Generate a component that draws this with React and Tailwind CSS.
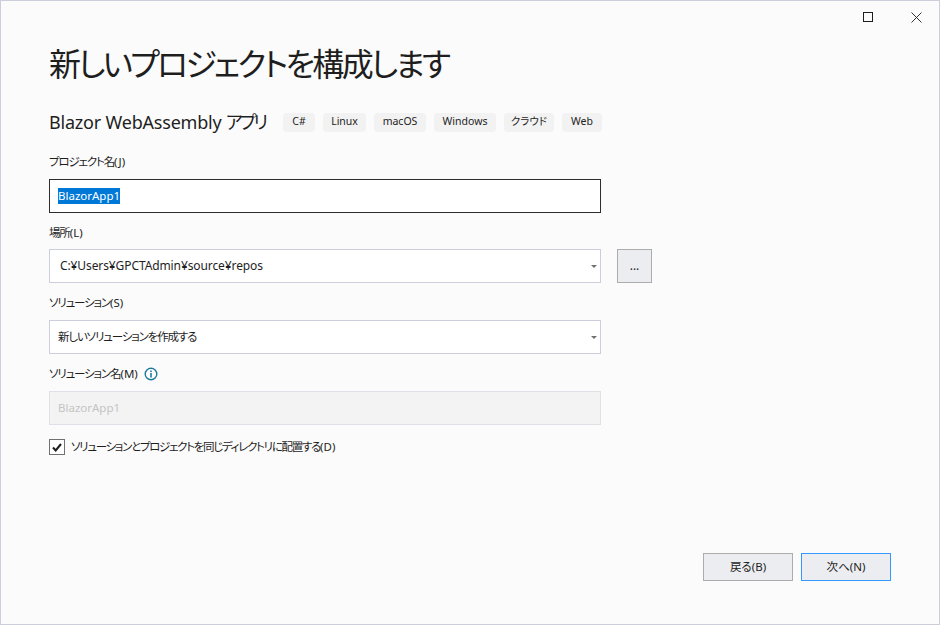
const tags = [
  ['C#', 'w-[32px]'],
  ['Linux', 'w-[43px]'],
  ['macOS', 'w-[52px]'],
  ['Windows', 'w-[62px]'],
  ['クラウド', 'w-[50px]'],
  ['Web', 'w-[40px]'],
];

function Caret() {
  return (
    <svg width="6" height="3" viewBox="0 0 6 3" className="absolute right-[3px] top-[15px]">
      <path d="M0 0h6L3 3z" fill="#717171" />
    </svg>
  );
}

function Jp({ children }) {
  return <span className="tracking-[-1.15px]">{children}</span>;
}

function Label({ children, className = '' }) {
  return (
    <div className={`h-[18px] flex items-center text-[11.5px] leading-[18px] text-[#1e1e1e] ${className}`}>
      {children}
    </div>
  );
}

function Combo({ children, className = 'pl-[8px] text-[11.5px]' }) {
  return (
    <div className={`relative w-[552px] h-[34px] border border-[#cccedb] bg-white flex items-center text-[#1e1e1e] ${className}`}>
      {children}
      <Caret />
    </div>
  );
}

export default function App() {
  return (
    <div
      className="w-[940px] h-[625px] border border-[#cccedb] bg-[#fbfbfb] flex flex-col overflow-hidden [font-feature-settings:'palt']"
      style={{ fontFamily: '"Noto Sans", "Noto Sans CJK JP", sans-serif' }}
    >
      {/* Window buttons */}
      <div className="h-[32px] flex justify-end items-start pt-[11px] pr-[17px] gap-[38px]">
        <svg width="10" height="10" viewBox="0 0 10 10">
          <rect x="0.5" y="0.5" width="9" height="9" fill="none" stroke="#1e1e1e" />
        </svg>
        <svg width="11" height="11" viewBox="0 0 11 11">
          <path d="M0.5 0.5l10 10M10.5 0.5l-10 10" fill="none" stroke="#1e1e1e" strokeWidth="0.9" />
        </svg>
      </div>

      <div className="pl-[48px] flex flex-col">
        <h1 className="mt-[7px] h-[48px] flex items-center text-[32px] leading-[48px] font-normal text-[#1e1e1e] tracking-[-2.7px]">
          新しいプロジェクトを構成します
        </h1>

        {/* Template name and tags */}
        <div className="mt-[22px] h-[24px] flex items-center">
          <span className="w-[234px] text-[18px] leading-[24px] text-[#1e1e1e] tracking-[-0.2px]">
            Blazor WebAssembly <span className="tracking-[-3px]">アプリ</span>
          </span>
          <div className="flex gap-[8px]">
            {tags.map(([tag, w]) => (
              <span
                key={tag}
                className={`${w} h-[19px] rounded-[4px] bg-[#f2f2f2] flex items-center justify-center text-[10.5px] text-[#1e1e1e]`}
              >
                {tag}
              </span>
            ))}
          </div>
        </div>

        <Label className="mt-[19px]"><Jp>プロジェクト名</Jp>(J)</Label>
        <div className="mt-[8px] w-[552px] h-[34px] border border-[#2d2d30] bg-white pl-[8px] flex items-center text-[11.5px]">
          <span className="bg-[#0078d7] text-white leading-[16px]">BlazorApp1</span>
        </div>

        <Label className="mt-[11px]"><Jp>場所</Jp>(L)</Label>
        <div className="mt-[7px] flex gap-[16px]">
          <Combo className="pl-[10px] text-[12px] tracking-[-0.1px]">C:¥Users¥GPCTAdmin¥source¥repos</Combo>
          <div className="w-[35px] h-[34px] border border-[#acacac] bg-[#ecedf1] flex items-center justify-center text-[12px] text-[#1e1e1e]">
            ...
          </div>
        </div>

        <Label className="mt-[11px]"><Jp>ソリューション</Jp>(S)</Label>
        <div className="mt-[8px]">
          <Combo><Jp>新しいソリューションを作成する</Jp></Combo>
        </div>

        <Label className="mt-[11px]">
          <Jp>ソリューション名</Jp>(M)
          <svg width="14" height="14" viewBox="0 0 14 14" className="ml-[6px]">
            <circle cx="7" cy="7" r="5.8" fill="#fff" stroke="#1c7aa0" strokeWidth="1.4" />
            <rect x="6.2" y="6" width="1.6" height="4.5" fill="#1c7aa0" />
            <rect x="6.2" y="3.5" width="1.6" height="1.6" fill="#1c7aa0" />
          </svg>
        </Label>
        <div className="mt-[8px] w-[552px] h-[34px] border border-[#e0e0e6] bg-[#f3f3f3] pl-[8px] flex items-center text-[11.5px] text-[#c4c4c4]">
          BlazorApp1
        </div>

        {/* Checkbox */}
        <div className="mt-[14px] h-[16px] flex items-center gap-[6px]">
          <div className="w-[16px] h-[16px] border border-[#717171] bg-white flex items-center justify-center">
            <svg width="10" height="9" viewBox="0 0 10 9">
              <path d="M1 4.5l2.7 3L9 1" fill="none" stroke="#1e1e1e" strokeWidth="2" />
            </svg>
          </div>
          <span className="text-[11.5px] text-[#1e1e1e]"><span className="tracking-[-1.3px]">ソリューションとプロジェクトを同じディレクトリに配置する</span>(D)</span>
        </div>
      </div>

      {/* Footer buttons */}
      <div className="mt-[98px] pr-[48px] flex justify-end gap-[8px]">
        <div className="w-[90px] h-[28px] border border-[#acacac] bg-[#ecedf1] flex items-center justify-center text-[11.5px] text-[#1e1e1e]">
          戻る(B)
        </div>
        <div className="w-[90px] h-[28px] border border-[#3399ff] bg-[#ecedf1] flex items-center justify-center text-[11.5px] text-[#1e1e1e]">
          次へ(N)
        </div>
      </div>
    </div>
  );
}
